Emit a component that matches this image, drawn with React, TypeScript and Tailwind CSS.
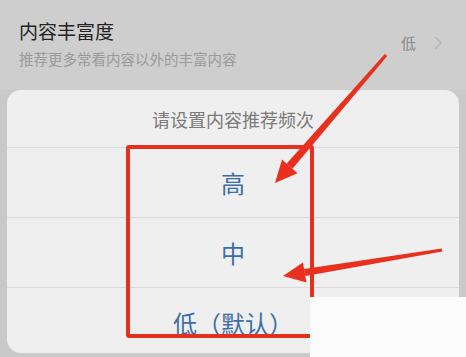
import React from "react";

const font = { fontFamily: '"Noto Sans CJK SC", "Noto Sans", sans-serif' };

function Option({ label, last }: { label: string; last?: boolean }) {
  return (
    <div
      className={`flex h-[70px] items-center justify-center text-[24px] text-[#3c6da6] ${
        last ? "" : "border-b border-[#dadada]"
      }`}
    >
      {label}
    </div>
  );
}

export default function App() {
  return (
    <div className="relative h-[357px] w-[466px] overflow-hidden bg-[#c9c9c9]" style={font}>
      {/* setting row behind the sheet */}
      <div className="flex h-[90px] items-center justify-between bg-[#cecece] pb-[4px] pl-[19px] pr-[24px]">
        <div className="flex flex-col">
          <span className="text-[19px] leading-[26px] text-[#232323]">内容丰富度</span>
          <span className="mt-[5px] text-[14.5px] leading-[20px] text-[#9a9a9a]">
            推荐更多常看内容以外的丰富内容
          </span>
        </div>
        <div className="flex items-center gap-[18px] pl-[3px] text-[#8a8a8a]">
          <span className="text-[15px]">低</span>
          <svg width="8" height="14" viewBox="0 0 8 14" fill="none">
            <path d="M1 1l6 6-6 6" stroke="#b4b4b4" strokeWidth="1.3" />
          </svg>
        </div>
      </div>

      {/* bottom sheet */}
      <div className="mx-[7px] h-[263px] rounded-[14px] bg-[#efefef]">
        <div className="flex h-[58px] items-center justify-center border-b border-[#dadada] pt-[2px] text-[18px] text-[#7a7a7a]">
          请设置内容推荐频次
        </div>
        <Option label="高" />
        <Option label="中" />
        <Option label="低（默认）" last />
      </div>

      {/* annotation: red frame */}
      <div className="absolute left-[126px] top-[145px] h-[193px] w-[188px] rounded-[3px] border-[4px] border-[#e6301f]" />

      {/* annotation: arrows */}
      <svg className="absolute left-0 top-0" width="466" height="357" viewBox="0 0 466 357">
        <g fill="#e8301f">
          <polygon points="387.2,56.1 384.8,53.9 286.5,163.8 292.5,168.8" />
          <polygon points="275,183 297.5,173.2 282,159.6" />
          <polygon points="442.3,251.5 441.7,248.5 303.9,269 305.5,276" />
          <polygon points="283,276 306.5,282.5 302.9,262.5" />
        </g>
      </svg>

      {/* white patch */}
      <div className="absolute left-[310px] top-[297px] h-[60px] w-[156px] bg-[#fbfbfb]" />
    </div>
  );
}
